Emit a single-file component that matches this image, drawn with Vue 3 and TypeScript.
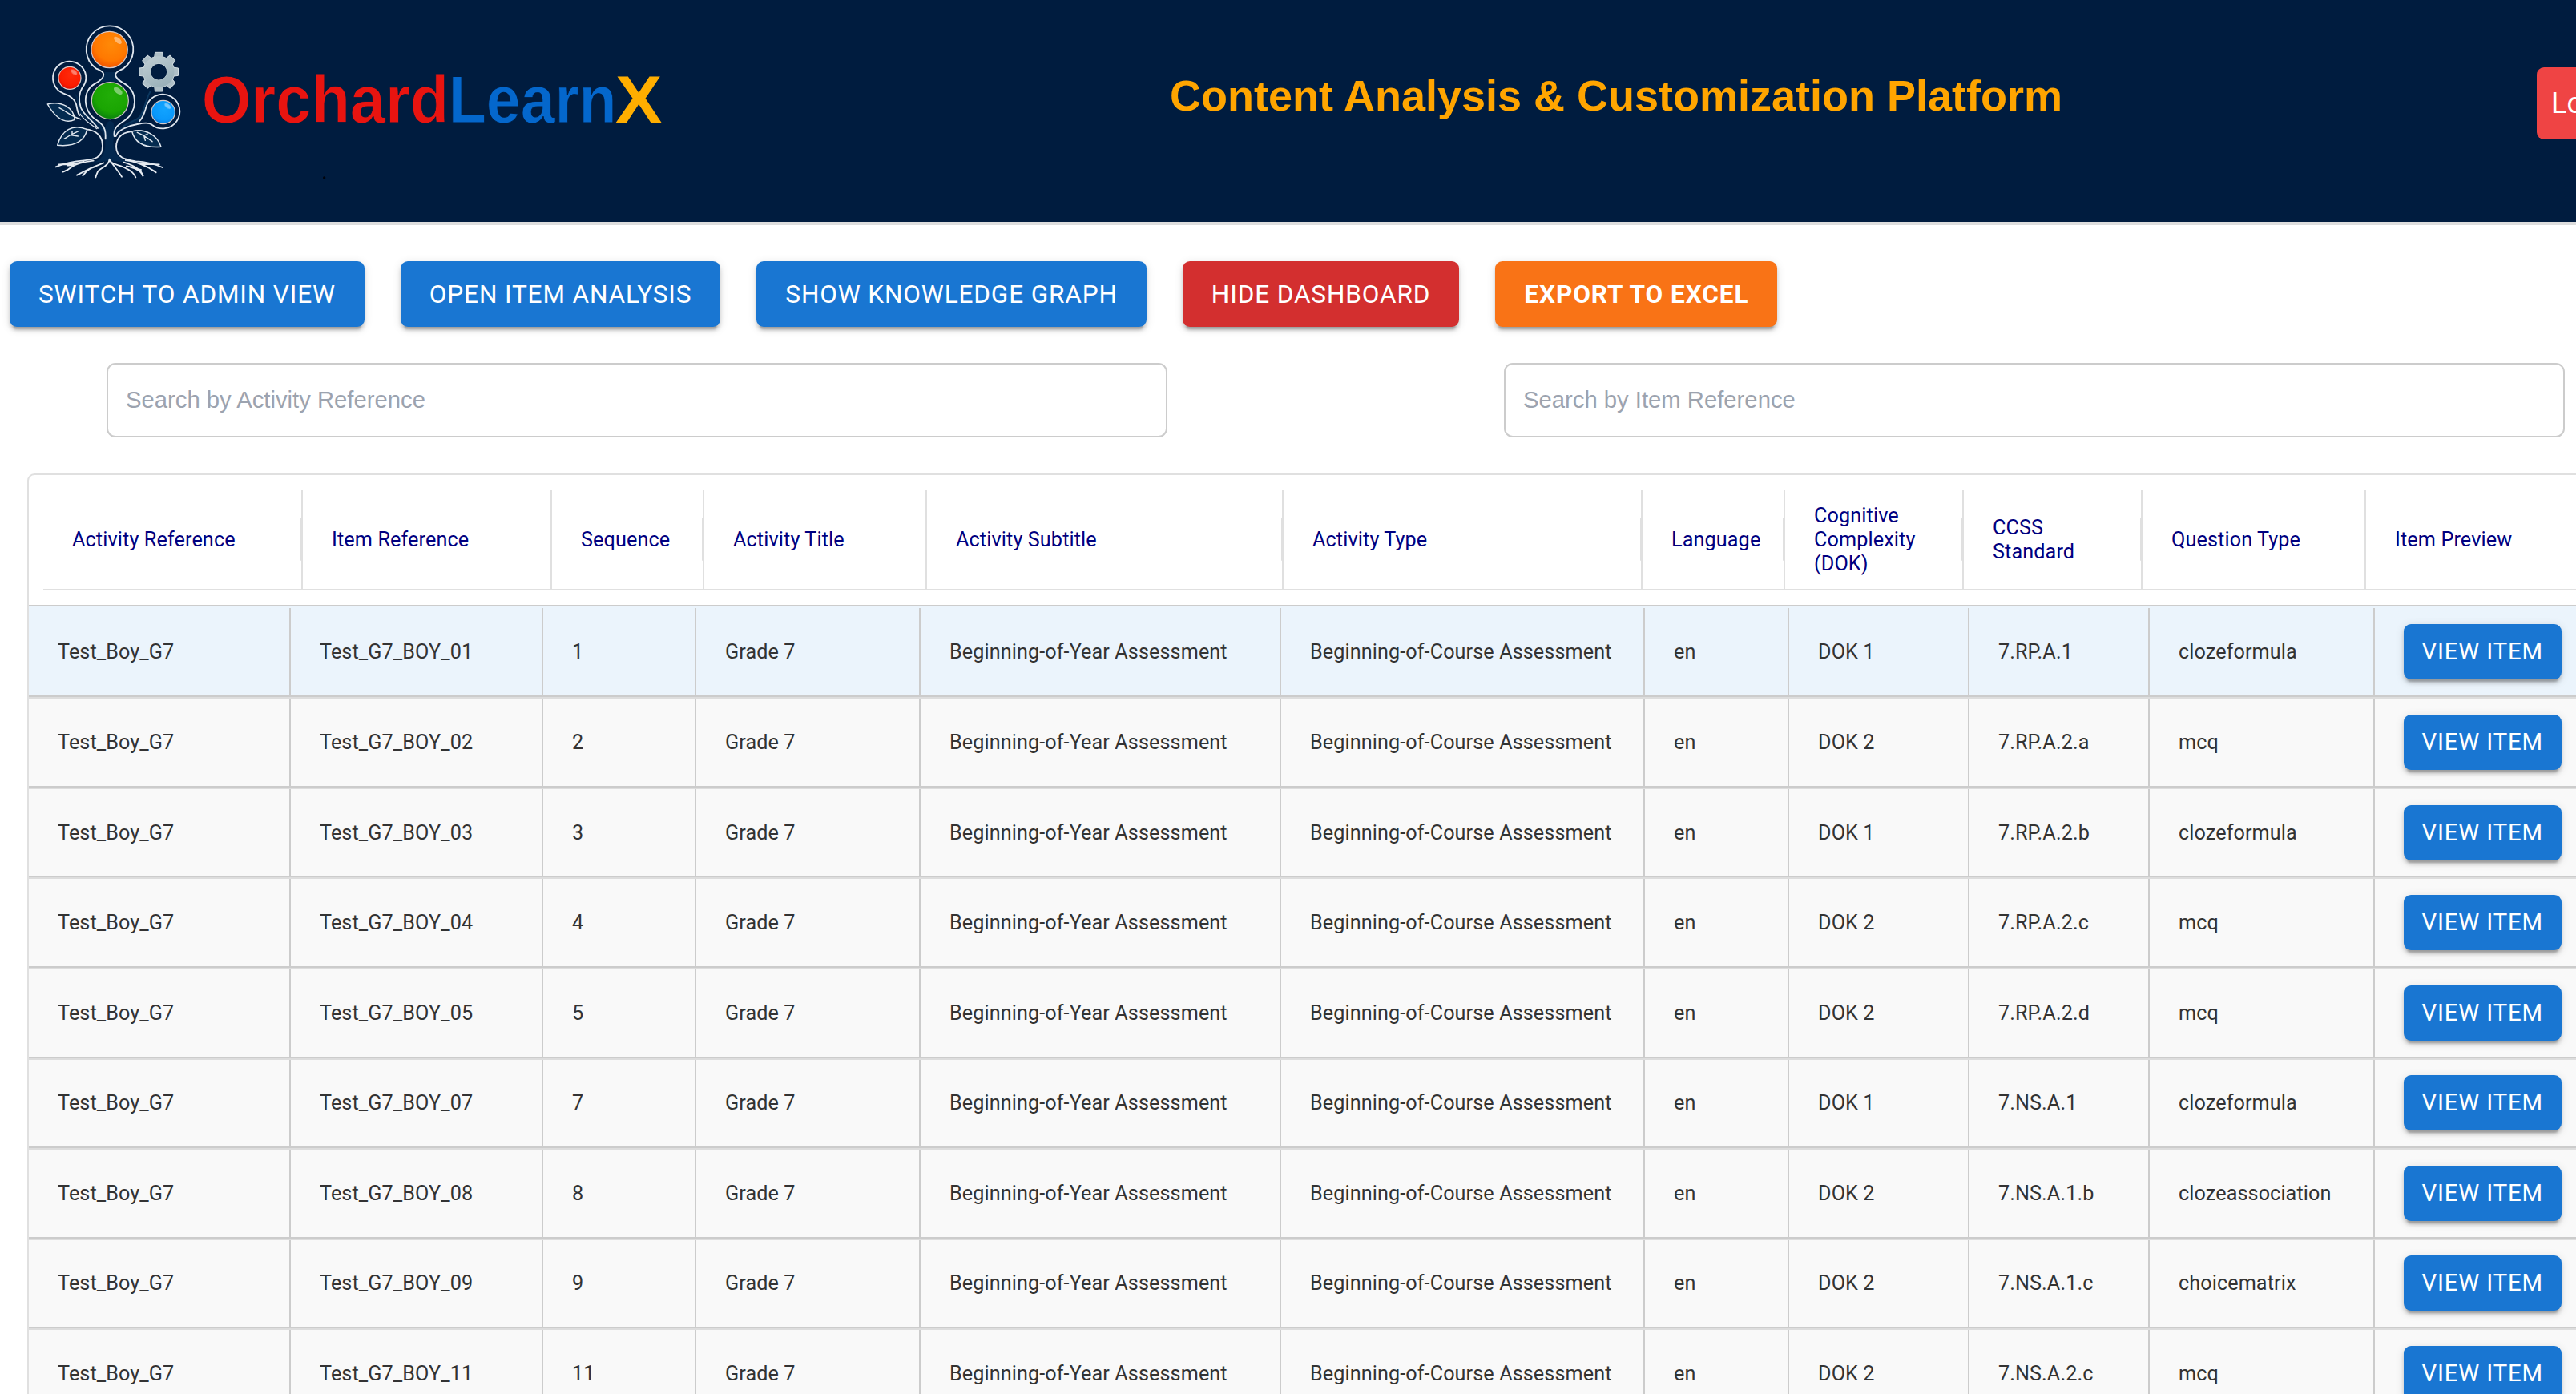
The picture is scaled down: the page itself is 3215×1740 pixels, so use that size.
<script setup lang="ts">
interface Column {
  label: string
  head: number
  body: number
}

interface Item {
  item: string
  seq: number
  dok: string
  standard: string
  type: string
}

const columns: Column[] = [
  { label: 'Activity Reference', head: 324, body: 327 },
  { label: 'Item Reference', head: 311, body: 315 },
  { label: 'Sequence', head: 190, body: 191 },
  { label: 'Activity Title', head: 278, body: 280 },
  { label: 'Activity Subtitle', head: 445, body: 450 },
  { label: 'Activity Type', head: 448, body: 454 },
  { label: 'Language', head: 178, body: 180 },
  { label: 'Cognitive Complexity (DOK)', head: 223, body: 225 },
  { label: 'CCSS Standard', head: 223, body: 225 },
  { label: 'Question Type', head: 279, body: 281 },
  { label: 'Item Preview', head: 290, body: 290 },
]

const headTemplate = columns.map((c) => c.head + 'px').join(' ')
const bodyTemplate = columns.map((c) => c.body + 'px').join(' ')

const items: Item[] = [
  { item: 'Test_G7_BOY_01', seq: 1, dok: 'DOK 1', standard: '7.RP.A.1', type: 'clozeformula' },
  { item: 'Test_G7_BOY_02', seq: 2, dok: 'DOK 2', standard: '7.RP.A.2.a', type: 'mcq' },
  { item: 'Test_G7_BOY_03', seq: 3, dok: 'DOK 1', standard: '7.RP.A.2.b', type: 'clozeformula' },
  { item: 'Test_G7_BOY_04', seq: 4, dok: 'DOK 2', standard: '7.RP.A.2.c', type: 'mcq' },
  { item: 'Test_G7_BOY_05', seq: 5, dok: 'DOK 2', standard: '7.RP.A.2.d', type: 'mcq' },
  { item: 'Test_G7_BOY_07', seq: 7, dok: 'DOK 1', standard: '7.NS.A.1', type: 'clozeformula' },
  { item: 'Test_G7_BOY_08', seq: 8, dok: 'DOK 2', standard: '7.NS.A.1.b', type: 'clozeassociation' },
  { item: 'Test_G7_BOY_09', seq: 9, dok: 'DOK 2', standard: '7.NS.A.1.c', type: 'choicematrix' },
  { item: 'Test_G7_BOY_11', seq: 11, dok: 'DOK 2', standard: '7.NS.A.2.c', type: 'mcq' },
]

const cells = (r: Item) => [
  'Test_Boy_G7', r.item, r.seq, 'Grade 7', 'Beginning-of-Year Assessment',
  'Beginning-of-Course Assessment', 'en', r.dok, r.standard, r.type,
]

const teeth = [0, 45, 90, 135, 180, 225, 270, 315]
</script>

<template>
  <div class="page">
    <header class="topbar">
      <svg class="logo" viewBox="0 0 2460 690" width="820" height="230">
        <defs>
          <radialGradient id="ballO" cx=".55" cy=".35" r=".7"><stop offset="0" stop-color="#ff8a08" /><stop offset=".65" stop-color="#ff7800" /><stop offset="1" stop-color="#ee4c00" /></radialGradient>
          <radialGradient id="ballR" cx=".55" cy=".35" r=".7"><stop offset="0" stop-color="#ff2a0a" /><stop offset=".7" stop-color="#fb1c00" /><stop offset="1" stop-color="#d80800" /></radialGradient>
          <radialGradient id="ballG" cx=".55" cy=".35" r=".7"><stop offset="0" stop-color="#22ae08" /><stop offset=".65" stop-color="#1aa502" /><stop offset="1" stop-color="#067a10" /></radialGradient>
          <radialGradient id="ballB" cx=".55" cy=".35" r=".7"><stop offset="0" stop-color="#12a4ff" /><stop offset=".7" stop-color="#0a98fa" /><stop offset="1" stop-color="#0872d4" /></radialGradient>
          <linearGradient id="gear" gradientUnits="userSpaceOnUse" x1="-50" y1="-70" x2="30" y2="74"><stop offset="0" stop-color="#c3d0d6" /><stop offset="1" stop-color="#93abb4" /></linearGradient>
        </defs>
        <g fill="#03284f">
          <path d="M302 240H340C342 260 352 268 364 276H278C292 266 304 258 302 240Z" />
          <path d="M186 315C206 345 196 390 222 408C262 436 302 452 304 500C306 548 290 572 250 580L320 572L400 580C360 570 334 548 334 505C336 450 400 440 432 424C456 392 456 352 474 312C446 354 446 394 420 416C380 436 350 450 342 462C330 440 345 430 322 422C300 430 310 452 300 448C270 420 226 400 212 376C204 350 206 330 186 315Z" />
        </g>
        <g fill="none" stroke="#dfe6ee" stroke-width="5.5" stroke-linecap="round" stroke-linejoin="round">
          <path d="M305 490C307 452 297 438 276 423C218 388 216 309 266 283C286 272 298 262 298 249C297 236 281 232 269 226A88 88 0 1 1 373 226C358 234 344 238 342 249C342 262 356 271 372 281C430 312 424 390 377 421C348 440 334 452 338 480" />
          <path d="M276 450C256 420 224 402 212 372C203 342 206 318 218 298C228 286 232 275 232 262A62 62 0 1 0 146 319C176 329 190 341 195 360C200 382 200 392 208 402" />
          <path d="M210 396C222 420 248 432 272 452" stroke-width="3.5" />
          <path d="M432 424C456 396 452 376 462 358A64 64 0 1 1 479 437C466 426 440 432 424 435C388 441 350 458 344 480" />
          <path d="M374 441C404 420 424 422 437 404C454 376 452 350 472 314" stroke="#0b365e" stroke-width="6" />
          <path d="M182 462C242 442 294 462 294 516C294 562 262 568 224 571C184 574 150 582 119 595" />
          <path d="M424 462C370 460 345 482 345 520C346 562 380 567 418 574C458 576 490 584 518 597" />
          <path d="M88 360C142 346 186 374 190 418C144 438 112 402 88 360ZM132 374C158 386 178 408 212 416" fill="#042b50" stroke-width="4.5" />
          <path d="M125 514C140 460 182 430 236 455C226 500 190 520 125 514ZM150 490C168 478 182 470 206 460M180 474V462M178 476L202 480" fill="#042b50" stroke-width="4.5" />
          <path d="M404 462C450 448 500 475 513 520C450 525 415 505 404 462ZM424 466C448 476 462 486 480 500M448 478L462 472M450 482L454 496" fill="#042b50" stroke-width="4.5" />
        </g>
        <g fill="none" stroke="#e6ebf1" stroke-width="5.5" stroke-linecap="round" stroke-linejoin="round">
          <path d="M320 566C318 588 296 596 282 606C272 614 272 624 268 634M320 568C334 590 350 606 366 632M322 574C338 588 366 590 384 602C402 610 412 620 418 634" />
          <path d="M298 580C270 590 244 600 198 626M262 596C236 604 230 616 220 628" />
          <path d="M260 572C228 576 200 580 180 594C166 606 158 610 146 614M224 576C180 586 152 586 130 586M190 588L164 590" />
          <path d="M374 578C410 590 442 606 444 628M398 596C420 602 438 612 446 628M384 592C408 596 424 604 438 606" />
          <path d="M380 570C420 574 450 590 466 598C478 606 484 608 494 616M430 582C462 588 486 584 506 586" />
        </g>
        <g fill="none" stroke="#d6c9c8" stroke-width="3.5">
          <circle cx="320" cy="156" r="68" fill="url(#ballO)" />
          <circle cx="171" cy="262" r="42" fill="url(#ballR)" />
          <circle cx="322" cy="347" r="69" fill="url(#ballG)" />
          <circle cx="521" cy="390" r="44" fill="url(#ballB)" />
        </g>
        <g fill="#fff" opacity=".42">
          <ellipse cx="351" cy="121" rx="18" ry="9" transform="rotate(42 351 121)" />
          <ellipse cx="187" cy="240" rx="13" ry="7" transform="rotate(38 187 240)" />
          <ellipse cx="352" cy="310" rx="19" ry="10" transform="rotate(38 352 310)" />
          <ellipse cx="538" cy="367" rx="14" ry="7" transform="rotate(38 538 367)" />
        </g>
        <g transform="translate(504.500 239)">
          <circle r="45" fill="none" stroke="#d4dee3" stroke-width="30" />
          <g fill="#aebfc7" stroke="#d4dee3" stroke-width="3" stroke-linejoin="round">
            <path v-for="a in teeth" :key="a" d="M-17 -50L-14 -73H14L17 -50Z" :transform="`rotate(${a})`" />
          </g>
          <circle r="44.500" fill="none" stroke="url(#gear)" stroke-width="27" />
        </g>
        <circle cx="1124" cy="636" r="5" fill="#00040c" />
        <g font-family="'Liberation Sans', Arial, sans-serif" font-weight="700" font-size="248">
          <g stroke="#001c3f" stroke-width="2.5">
            <text x="665" y="430" fill="#e81410" textLength="926" lengthAdjust="spacingAndGlyphs">Orchard</text>
            <text x="1589" y="430" fill="#0467cc" textLength="630" lengthAdjust="spacingAndGlyphs">Learn</text>
          </g>
          <text x="2214" y="430" fill="#ffae00" textLength="175" lengthAdjust="spacingAndGlyphs">X</text>
        </g>
      </svg>
      <h1 class="title">Content Analysis &amp; Customization Platform</h1>
      <button class="logout">Logout</button>
    </header>

    <div class="toolbar">
      <button class="btn">Switch to Admin View</button>
      <button class="btn">Open Item Analysis</button>
      <button class="btn">Show Knowledge Graph</button>
      <button class="btn danger">Hide Dashboard</button>
      <button class="btn export">Export to Excel</button>
    </div>

    <div class="filters">
      <input type="text" placeholder="Search by Activity Reference" />
      <input type="text" placeholder="Search by Item Reference" />
    </div>

    <div class="table">
      <div class="thead" :style="{ gridTemplateColumns: headTemplate }">
        <div v-for="c in columns" :key="c.label" class="th"><span>{{ c.label }}</span></div>
      </div>
      <div
        v-for="(row, i) in items"
        :key="row.item"
        class="row"
        :class="{ hovered: i === 0 }"
        :style="{ gridTemplateColumns: bodyTemplate }"
      >
        <div v-for="(text, j) in cells(row)" :key="j" class="td">{{ text }}</div>
        <div class="td last"><button class="btn small">View Item</button></div>
      </div>
    </div>
  </div>
</template>

<style>
html,
body {
  margin: 0;
  overflow: hidden;
  background: #fff;
}
</style>

<style scoped>
.page {
  width: 3215px;
  height: 1740px;
  overflow: hidden;
  font-family: Roboto, sans-serif;
  background: #fff;
}
.topbar {
  display: grid;
  grid-template-columns: 1460px 1706px 170px;
  align-items: start;
  height: 277px;
  border-bottom: 4px solid #ddd;
  background: #001c3f;
  overflow: hidden;
}
.logo {
  display: block;
  margin: 10px 0 0 30px;
}
.title {
  margin: 88px 0 0;
  font: 700 54px/62px 'Liberation Sans', Arial, sans-serif;
  color: #ffa500;
  white-space: nowrap;
}
.logout {
  height: 90px;
  margin-top: 84px;
  padding: 0 18px;
  border: 0;
  border-radius: 9px;
  background: #ef4444;
  color: #fff;
  font: 400 36px Roboto, sans-serif;
  text-align: left;
}
.toolbar {
  display: flex;
  gap: 45px;
  padding: 45px 12px 0;
}
.btn {
  height: 82px;
  padding: 0 36px;
  border: 0;
  border-radius: 9px;
  background: #1976d2;
  color: #fff;
  font: 400 31.5px/55px Roboto, sans-serif;
  letter-spacing: 0.88px;
  text-transform: uppercase;
  white-space: nowrap;
  box-shadow: 0 6.75px 2.25px -4.5px rgba(0, 0, 0, 0.2), 0 4.5px 4.5px rgba(0, 0, 0, 0.14),
    0 2.25px 11.25px rgba(0, 0, 0, 0.12);
}
.btn.danger {
  background: #d32f2f;
}
.btn.export {
  background: #f97316;
  font-weight: 700;
  letter-spacing: 0.94px;
}
.btn.small {
  height: 69px;
  padding: 0 22.5px;
  font-size: 29.25px;
  line-height: 51px;
}
.filters {
  display: flex;
  justify-content: space-between;
  padding: 45px 14px 0 133px;
}
.filters input {
  box-sizing: border-box;
  width: 1324px;
  height: 93px;
  padding: 0 22px;
  border: 2px solid #ccc;
  border-radius: 11px;
  background: #fff;
  font: 400 29.25px 'Liberation Sans', Arial, sans-serif;
}
.filters input::placeholder {
  color: #9ca3af;
  opacity: 1;
}
.table {
  width: 3300px;
  margin: 45px 0 0 34px;
  border: 2px solid #e0e0e0;
  border-radius: 9px;
  overflow: hidden;
}
.thead {
  display: grid;
  height: 126px;
  padding: 18px;
  border-bottom: 2px solid #ccc;
}
.th {
  position: relative;
  box-sizing: border-box;
  display: flex;
  align-items: center;
  padding: 2px 36px 0;
  border-right: 2px solid #e0e0e0;
  border-bottom: 2px solid #e0e0e0;
  color: #000080;
  font-size: 25.2px;
  letter-spacing: 0.12px;
  line-height: 30.24px;
}
.th::after {
  content: '';
  position: absolute;
  right: -1px;
  top: 35px;
  width: 2px;
  height: 54px;
  border-radius: 2px;
  background: #e0e0e0;
}
.row {
  display: grid;
  box-sizing: border-box;
  height: 112.53px;
  background: #f9f9f9;
  border-top: 2px solid #ddd;
  border-bottom: 2px solid #ccc;
}
.row.hovered {
  height: 113.45px;
  background: #ebf4fc;
  border-top-color: #ebf4fc;
}
.td {
  box-sizing: border-box;
  display: flex;
  align-items: center;
  padding-left: 36px;
  border-right: 2px solid #ccc;
  color: #333;
  font-size: 25.2px;
  letter-spacing: 0.1px;
  white-space: nowrap;
}
.td.last {
  border-right: 0;
}
</style>
